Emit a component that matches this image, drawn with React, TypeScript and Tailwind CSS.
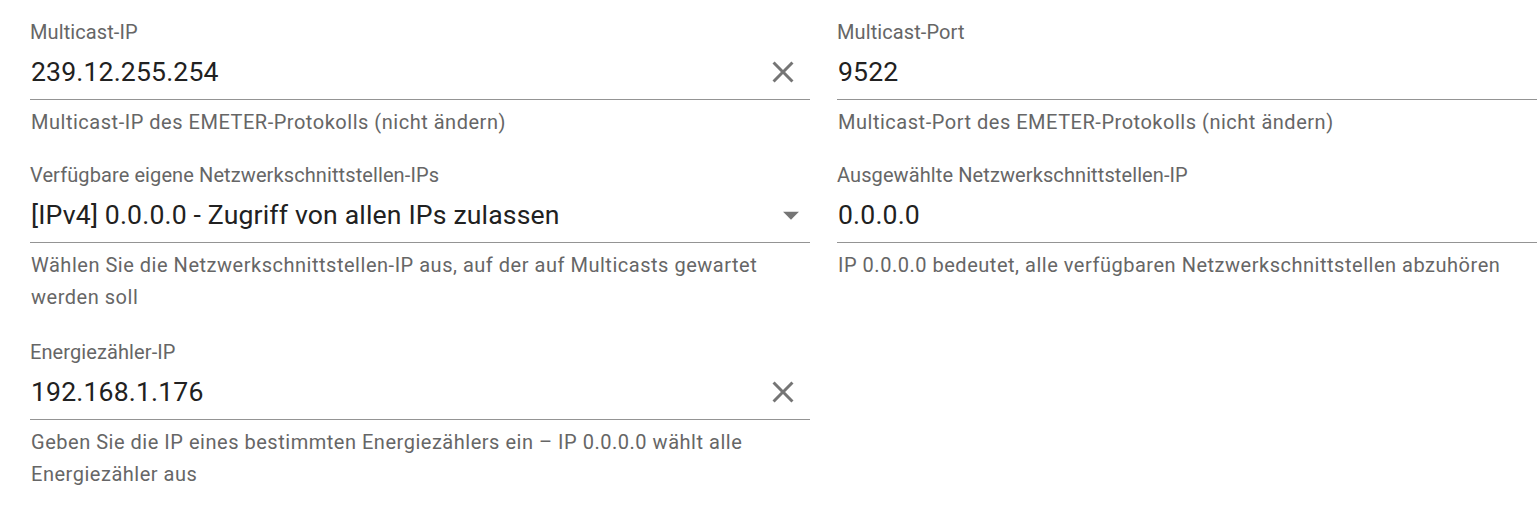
import React from "react";

const font = { fontFamily: "Roboto, 'Noto Sans', sans-serif" };

function ClearIcon() {
  return (
    <svg width="36" height="36" viewBox="0 0 24 24" fill="#757575">
      <path d="M19 6.41 17.59 5 12 10.59 6.41 5 5 6.41 10.59 12 5 17.59 6.41 19 12 13.41 17.59 19 19 17.59 13.41 12z" />
    </svg>
  );
}

function ArrowIcon() {
  return (
    <svg width="38" height="38" viewBox="0 0 24 24" fill="#757575">
      <path d="M7 10l5 5 5-5z" />
    </svg>
  );
}

function Field({
  label,
  value,
  helper,
  icon,
  className = "",
}: {
  label: string;
  value: string;
  helper: string;
  icon?: "clear" | "arrow";
  className?: string;
}) {
  return (
    <div className={"flex flex-col " + className}>
      <div className="text-[20px] leading-[24px] text-[#666666] tracking-[0.005em] whitespace-nowrap">{label}</div>
      <div className="h-[56px] flex items-center border-b border-[#949494] pl-px">
        <div className="flex-1 text-[26.6px] text-[#212121] tracking-[0.006em] whitespace-nowrap pt-px">{value}</div>
        {icon === "clear" && (
          <div className="w-[36px] h-[36px] mr-[9px] flex items-center justify-center">
            <ClearIcon />
          </div>
        )}
        {icon === "arrow" && (
          <div className="w-[38px] h-[38px] mr-0 flex items-center justify-center">
            <ArrowIcon />
          </div>
        )}
      </div>
      <div className="mt-[6px] text-[20px] leading-[32px] text-[#666666] tracking-[0.026em] pl-px">{helper}</div>
    </div>
  );
}

export default function App() {
  return (
    <div className="w-[1537px] h-[524px] overflow-hidden bg-white" style={font}>
      <div className="grid grid-cols-[780px_780px] gap-x-[27px] gap-y-[25px] pl-[30px] pt-[20px]">
        <Field
          label="Multicast-IP"
          value="239.12.255.254"
          helper="Multicast-IP des EMETER-Protokolls (nicht ändern)"
          icon="clear"
        />
        <Field
          label="Multicast-Port"
          value="9522"
          helper="Multicast-Port des EMETER-Protokolls (nicht ändern)"
        />
        <Field
          label="Verfügbare eigene Netzwerkschnittstellen-IPs"
          value="[IPv4] 0.0.0.0 - Zugriff von allen IPs zulassen"
          helper="Wählen Sie die Netzwerkschnittstellen-IP aus, auf der auf Multicasts gewartet werden soll"
          icon="arrow"
        />
        <Field
          label="Ausgewählte Netzwerkschnittstellen-IP"
          value="0.0.0.0"
          helper="IP 0.0.0.0 bedeutet, alle verfügbaren Netzwerkschnittstellen abzuhören"
        />
        <Field
          className="mt-[2px]"
          label="Energiezähler-IP"
          value="192.168.1.176"
          helper="Geben Sie die IP eines bestimmten Energiezählers ein – IP 0.0.0.0 wählt alle Energiezähler aus"
          icon="clear"
        />
        <div />
      </div>
    </div>
  );
}
